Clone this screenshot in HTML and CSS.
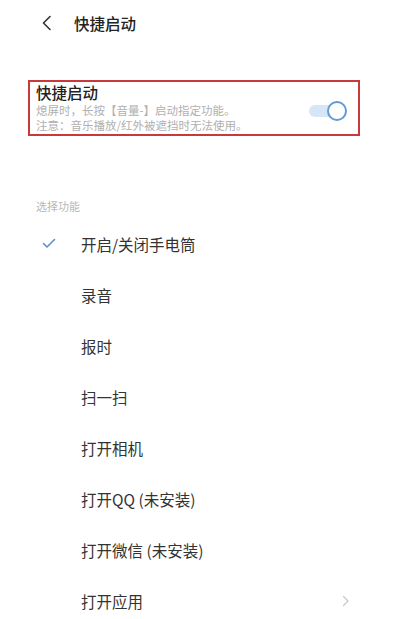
FILE: index.html
```html
<!DOCTYPE html>
<html lang="zh-CN">
<head>
    <meta charset="UTF-8">
    <meta name="viewport" content="width=device-width, initial-scale=1.0">
    <title>快捷启动</title>
    <link rel="stylesheet" href="styles.css">
</head>
<body>
    <div class="header">
        <svg class="back" width="12" height="16" viewBox="0 0 12 16">
            <path d="M9 1.5 L2.5 8 L9 14.5" fill="none" stroke="#333" stroke-width="1.6" stroke-linecap="round" stroke-linejoin="round"/>
        </svg>
        <span class="header-title">快捷启动</span>
    </div>

    <div class="setting-box">
        <div class="setting-text">
            <div class="setting-title">快捷启动</div>
            <div class="setting-desc">熄屏时，长按【音量-】启动指定功能。</div>
            <div class="setting-desc">注意：音乐播放/红外被遮挡时无法使用。</div>
        </div>
        <div class="toggle">
            <div class="toggle-track"></div>
            <div class="toggle-knob"></div>
        </div>
    </div>

    <div class="section-label">选择功能</div>

    <ul class="options">
        <li class="option">
            <span class="check">
                <svg width="14" height="11" viewBox="0 0 14 11">
                    <path d="M1.5 5.5 L5 9 L12.5 1.5" fill="none" stroke="#5a8fd2" stroke-width="1.6" stroke-linecap="round" stroke-linejoin="round"/>
                </svg>
            </span>
            <span class="option-name">开启/关闭手电筒</span>
        </li>
        <li class="option"><span class="check"></span><span class="option-name">录音</span></li>
        <li class="option"><span class="check"></span><span class="option-name">报时</span></li>
        <li class="option"><span class="check"></span><span class="option-name">扫一扫</span></li>
        <li class="option"><span class="check"></span><span class="option-name">打开相机</span></li>
        <li class="option"><span class="check"></span><span class="option-name">打开QQ (未安装)</span></li>
        <li class="option"><span class="check"></span><span class="option-name">打开微信 (未安装)</span></li>
        <li class="option">
            <span class="check"></span>
            <span class="option-name">打开应用</span>
            <svg class="arrow" width="8" height="12" viewBox="0 0 8 12">
                <path d="M1.5 1.5 L6 6 L1.5 10.5" fill="none" stroke="#c8c8c8" stroke-width="1.2" stroke-linecap="round" stroke-linejoin="round"/>
            </svg>
        </li>
    </ul>
</body>
</html>
```

FILE: styles.css
```css
body {
    margin: 0;
    background-color: #ffffff;
    font-family: "Noto Sans CJK SC", "Noto Sans", sans-serif;
    color: #333;
}
.header {
    display: flex;
    align-items: center;
    height: 46px;
    padding-left: 41px;
}
.back {
    display: block;
}
.header-title {
    margin-left: 21px;
    font-size: 15.5px;
    font-weight: 500;
    color: #222;
}
.setting-box {
    display: flex;
    align-items: center;
    margin: 34px 0 0 28px;
    width: 311px;
    padding: 0 11px 1px 6px;
    border: 2px solid #c9393c;
}
.setting-text {
    flex: 1;
}
.setting-title {
    font-size: 15.5px;
    line-height: 20px;
    font-weight: 500;
    color: #222;
    margin-bottom: 1px;
}
.setting-desc {
    font-size: 11.5px;
    line-height: 15px;
    color: #b0b0b0;
    white-space: nowrap;
}
.toggle {
    position: relative;
    width: 38px;
    height: 20px;
    margin-top: 6px;
}
.toggle-track {
    position: absolute;
    left: 0;
    top: 4px;
    width: 32px;
    height: 12px;
    border-radius: 6px;
    background-color: #d6e6f6;
}
.toggle-knob {
    position: absolute;
    right: 0;
    top: 0;
    width: 16px;
    height: 16px;
    border-radius: 50%;
    background-color: #fff;
    border: 2px solid #5f9bd6;
}
.section-label {
    margin: 63px 0 0 36px;
    font-size: 11px;
    line-height: 14px;
    color: #b8b8b8;
}
.options {
    list-style: none;
    margin: 5px 0 0;
    padding: 0;
}
.option {
    display: flex;
    align-items: center;
    height: 51px;
    padding-left: 42px;
}
.check {
    display: flex;
    width: 39px;
}
.option-name {
    flex: 1;
    font-size: 15.5px;
    color: #333;
}
.arrow {
    margin-right: 63px;
}
```
